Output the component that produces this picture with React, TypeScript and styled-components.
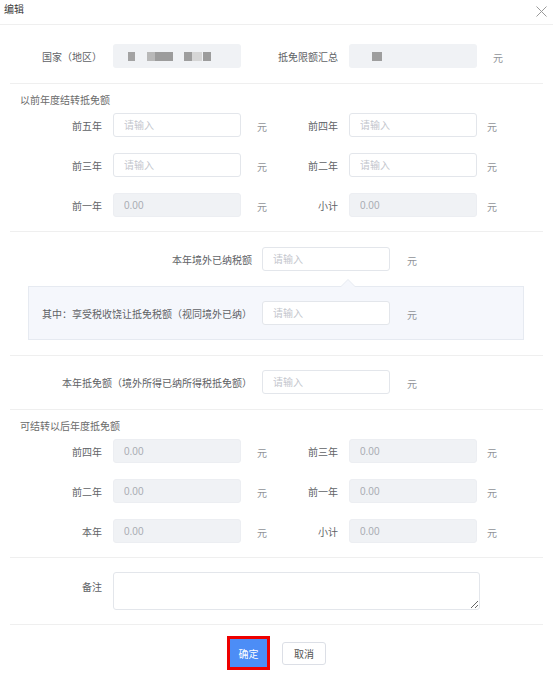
import React from "react";
import styled, { createGlobalStyle } from "styled-components";

const Global = createGlobalStyle`
  html, body { margin: 0; padding: 0; background: #fff; }
  body {
    font-family: "Liberation Sans", "Noto Sans CJK SC", sans-serif;
    font-size: 10px;
    color: #606266;
  }
  * { box-sizing: border-box; }
`;

const Dialog = styled.div`
  width: 553px;
  height: 674px;
  background: #fff;
  overflow: hidden;
`;

const Header = styled.div`
  height: 25px;
  border-bottom: 1px solid #efefef;
  display: flex;
  align-items: flex-start;
  justify-content: space-between;
  padding: 2px 6px 0 4px;
`;

const Title = styled.div`
  font-size: 10px;
  line-height: 16px;
  color: #3a3a3a;
`;

const CloseBtn = styled.button`
  border: none;
  background: none;
  padding: 0;
  margin-top: 3px;
  width: 12px;
  height: 12px;
  display: flex;
  align-items: center;
  justify-content: center;
  cursor: pointer;
`;

const Body = styled.div`
  padding: 0 10px;
`;

const Section = styled.div<{ $pt: number; $pb: number }>`
  padding-top: ${(p) => p.$pt}px;
  padding-bottom: ${(p) => p.$pb}px;
  border-bottom: 1px solid #efefef;
  display: flex;
  flex-direction: column;
`;

const SectionTitle = styled.div`
  height: 14px;
  line-height: 14px;
  padding-left: 10px;
  margin-bottom: 5px;
  color: #6b6b6b;
  font-size: 10px;
`;

const Rows = styled.div`
  display: flex;
  flex-direction: column;
  gap: 16px;
`;

const PairRow = styled.div`
  display: grid;
  grid-template-columns: 103px 128px 37px 71px 128px 1fr;
  align-items: center;
  height: 24px;
`;

const Label = styled.div`
  text-align: right;
  padding-right: 11px;
  white-space: nowrap;
  font-size: 10px;
  color: #606266;
`;

const Unit = styled.div<{ $pad: number }>`
  padding-left: ${(p) => p.$pad}px;
  padding-top: 2px;
  color: #909399;
  font-size: 10px;
`;

const Input = styled.input`
  width: 128px;
  height: 24px;
  border: 1px solid #e3e6eb;
  border-radius: 3px;
  padding: 0 10px;
  font-family: "Liberation Sans", "Noto Sans CJK SC", sans-serif;
  font-size: 10px;
  color: #606266;
  background: #fff;
  outline: none;
  &::placeholder { color: #c3c6cd; }
  &:disabled {
    background: #f0f2f5;
    border-color: #eceef2;
    color: #a9acb3;
  }
`;

const MaskedBox = styled.div<{ $pl: number }>`
  width: 128px;
  height: 24px;
  border-radius: 3px;
  background: #f0f2f5;
  display: flex;
  align-items: center;
  padding-left: ${(p) => p.$pl}px;
`;

const Block = styled.span<{ $w: number; $c: string; $ml: number }>`
  display: inline-block;
  width: ${(p) => p.$w}px;
  height: 9px;
  margin-left: ${(p) => p.$ml}px;
  background: ${(p) => p.$c};
`;

const WideRow = styled.div<{ $labelW: number }>`
  display: grid;
  grid-template-columns: ${(p) => p.$labelW}px 128px 1fr;
  align-items: center;
  height: 24px;
`;

const WideLabel = styled.div`
  text-align: right;
  padding-right: 10px;
  white-space: nowrap;
  font-size: 10px;
  color: #606266;
`;

const SubBox = styled.div`
  position: relative;
  margin: 15px 19px 0 18px;
  background: #f5f7fc;
  border: 1px solid #e6eaf1;
  padding: 14px 0;
`;

const Arrow = styled.span`
  position: absolute;
  top: -8px;
  left: 311px;
  width: 0;
  height: 0;
  border-left: 8px solid transparent;
  border-right: 8px solid transparent;
  border-bottom: 8px solid #e6eaf1;
  &::after {
    content: "";
    position: absolute;
    left: -7px;
    top: 1px;
    border-left: 7px solid transparent;
    border-right: 7px solid transparent;
    border-bottom: 7px solid #f5f7fc;
  }
`;

const NoteRow = styled.div`
  display: grid;
  grid-template-columns: 103px 367px;
  align-items: start;
`;

const NoteLabel = styled(Label)`
  padding-top: 7px;
`;

const TextArea = styled.textarea`
  width: 367px;
  height: 38px;
  border: 1px solid #e3e6eb;
  border-radius: 3px;
  resize: both;
  outline: none;
  font-family: "Liberation Sans", "Noto Sans CJK SC", sans-serif;
  font-size: 10px;
  padding: 4px 8px;
`;

const Footer = styled.div`
  display: flex;
  align-items: center;
  justify-content: center;
  gap: 15px;
  padding-top: 14px;
  padding-left: 3px;
`;

const Button = styled.button<{ $primary?: boolean }>`
  font-family: "Liberation Sans", "Noto Sans CJK SC", sans-serif;
  font-size: 10px;
  cursor: pointer;
  padding: 0;
  width: ${(p) => (p.$primary ? 37 : 44)}px;
  height: ${(p) => (p.$primary ? 28 : 23)}px;
  background: ${(p) => (p.$primary ? "#4c8df6" : "#fff")};
  color: ${(p) => (p.$primary ? "#fff" : "#555")};
  border: ${(p) => (p.$primary ? "none" : "1px solid #dcdfe6")};
  outline: ${(p) => (p.$primary ? "3px solid #ee0000" : "none")};
  border-radius: ${(p) => (p.$primary ? "0" : "3px")};
`;

type Field = { label: string; disabled?: boolean };

const Pair: React.FC<{ left: Field; right: Field }> = ({ left, right }) => (
  <PairRow>
    <Label>{left.label}</Label>
    {left.disabled ? (
      <Input disabled value="0.00" readOnly />
    ) : (
      <Input placeholder="请输入" />
    )}
    <Unit $pad={16}>元</Unit>
    <Label>{right.label}</Label>
    {right.disabled ? (
      <Input disabled value="0.00" readOnly />
    ) : (
      <Input placeholder="请输入" />
    )}
    <Unit $pad={10}>元</Unit>
  </PairRow>
);

const countryBlocks = [
  { w: 7, c: "#a3a3a3", ml: 0 },
  { w: 8, c: "#b8b8b8", ml: 12 },
  { w: 18, c: "#9c9c9c", ml: 0 },
  { w: 8, c: "#9e9e9e", ml: 11 },
  { w: 10, c: "#d6d6d6", ml: 0 },
  { w: 8, c: "#9c9c9c", ml: 1 },
];

export default function App() {
  return (
    <>
      <Global />
      <Dialog>
        <Header>
          <Title>编辑</Title>
          <CloseBtn aria-label="关闭">
            <svg width="11" height="11" viewBox="0 0 11 11">
              <path d="M0.5 0.5 L10.5 10.5 M10.5 0.5 L0.5 10.5" stroke="#9a9a9a" strokeWidth="1" />
            </svg>
          </CloseBtn>
        </Header>
        <Body>
          <Section $pt={19} $pb={15}>
            <PairRow>
              <Label>国家（地区）</Label>
              <MaskedBox $pl={15}>
                {countryBlocks.map((b, i) => (
                  <Block key={i} $w={b.w} $c={b.c} $ml={b.ml} />
                ))}
              </MaskedBox>
              <Unit $pad={16}></Unit>
              <Label>抵免限额汇总</Label>
              <MaskedBox $pl={23}>
                <Block $w={10} $c="#9e9e9e" $ml={0} />
              </MaskedBox>
              <Unit $pad={16}>元</Unit>
            </PairRow>
          </Section>

          <Section $pt={10} $pb={14}>
            <SectionTitle>以前年度结转抵免额</SectionTitle>
            <Rows>
              <Pair left={{ label: "前五年" }} right={{ label: "前四年" }} />
              <Pair left={{ label: "前三年" }} right={{ label: "前二年" }} />
              <Pair left={{ label: "前一年", disabled: true }} right={{ label: "小计", disabled: true }} />
            </Rows>
          </Section>

          <Section $pt={15} $pb={15}>
            <WideRow $labelW={252}>
              <WideLabel>本年境外已纳税额</WideLabel>
              <Input placeholder="请输入" />
              <Unit $pad={17}>元</Unit>
            </WideRow>
            <SubBox>
              <Arrow />
              <WideRow $labelW={233}>
                <WideLabel>其中：享受税收饶让抵免税额（视同境外已纳）</WideLabel>
                <Input placeholder="请输入" />
                <Unit $pad={17}>元</Unit>
              </WideRow>
            </SubBox>
          </Section>

          <Section $pt={14} $pb={15}>
            <WideRow $labelW={252}>
              <WideLabel>本年抵免额（境外所得已纳所得税抵免额）</WideLabel>
              <Input placeholder="请输入" />
              <Unit $pad={17}>元</Unit>
            </WideRow>
          </Section>

          <Section $pt={10} $pb={14}>
            <SectionTitle>可结转以后年度抵免额</SectionTitle>
            <Rows>
              <Pair left={{ label: "前四年", disabled: true }} right={{ label: "前三年", disabled: true }} />
              <Pair left={{ label: "前二年", disabled: true }} right={{ label: "前一年", disabled: true }} />
              <Pair left={{ label: "本年", disabled: true }} right={{ label: "小计", disabled: true }} />
            </Rows>
          </Section>

          <Section $pt={14} $pb={14}>
            <NoteRow>
              <NoteLabel>备注</NoteLabel>
              <TextArea />
            </NoteRow>
          </Section>
        </Body>
        <Footer>
          <Button $primary>确定</Button>
          <Button>取消</Button>
        </Footer>
      </Dialog>
    </>
  );
}
